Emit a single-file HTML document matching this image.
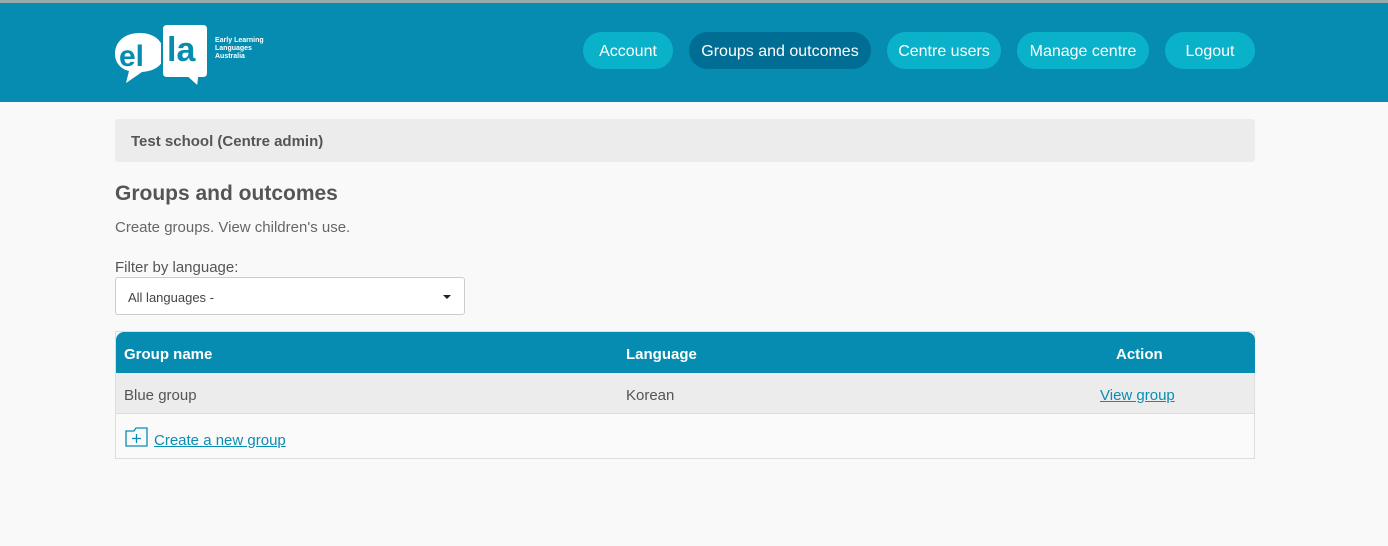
<!DOCTYPE html>
<html><head><style>
*{box-sizing:border-box;margin:0;padding:0}
body{width:1388px;height:546px;background:#f9f9f9;font-family:"Liberation Sans",sans-serif;color:#555;position:relative;overflow:hidden}
.top{position:absolute;top:0;left:0;width:1388px;height:3px;background:#9aa}
.hdr{position:absolute;top:3px;left:0;width:1388px;height:99px;background:#058cb0}
.btn{position:absolute;top:32px;height:37px;border-radius:19px;background:#0ab2c9;color:#fff;font-size:16px;line-height:39px;text-align:center}
.dark{background:#006d95}
.crumb{position:absolute;left:115px;top:119px;width:1140px;height:43px;background:#ececec;border-radius:3px;font-weight:bold;font-size:15px;line-height:45px;padding-left:16px;color:#555}
h1{position:absolute;left:115px;top:182px;font-size:21px;color:#555}
.p{position:absolute;left:115px;top:219px;font-size:15px;color:#666}
.lab{position:absolute;left:115px;top:259px;font-size:15px;color:#555}
.sel{position:absolute;left:115px;top:277px;width:350px;height:38px;background:#fff;border:1px solid #ccc;border-radius:3px;font-size:13px;line-height:39px;padding-left:12px;color:#444}
.sel:after{content:"";position:absolute;right:13px;top:17px;border:4px solid transparent;border-top:4px solid #222;border-bottom:none}
.tbl{position:absolute;left:115px;top:331px;width:1140px;height:128px;border:1px solid #ddd;background:#fafafa}
.th{position:absolute;left:0;top:0;width:1139px;height:41px;background:#058cb0;border-radius:8px 8px 0 0;color:#fff;font-weight:bold;font-size:15px}
.row{position:absolute;left:0;top:41px;width:1138px;height:41px;background:#ececec;border-bottom:1px solid #ddd;font-size:15px}
a{color:#0a8db3;text-decoration:underline}
</style></head><body>
<div class="top"></div>
<div class="hdr">
<svg style="position:absolute;left:114px;top:20px" width="96" height="62" viewBox="0 0 96 62">
<path d="M26 10 C10 10 1 19 1 31 C1 40 7 46 15 48 L12 60 L28 49 C41 48 50 42 50 31 C50 19 41 10 26 10Z" fill="#fff"/>
<path d="M53 1 H89 Q94 1 94 6 V50 Q94 55 89 55 H85 L84 64 L74 55 H53 Q48 55 48 50 V6 Q48 1 53 1Z" fill="#fff" stroke="#058cb0" stroke-width="2"/>
<text x="5" y="43" font-family="Liberation Sans" font-weight="bold" font-size="30" fill="#058cb0">el</text>
<text x="53" y="38" font-family="Liberation Sans" font-weight="bold" font-size="34" fill="#058cb0">la</text>
</svg>
<div style="position:absolute;left:215px;top:34px;color:#fff;font-size:7px;font-weight:bold;line-height:8px">Early Learning<br>Languages<br>Australia</div>
</div>
<div class="btn" style="left:583px;width:90px">Account</div>
<div class="btn dark" style="left:689px;width:182px">Groups and outcomes</div>
<div class="btn" style="left:887px;width:114px">Centre users</div>
<div class="btn" style="left:1017px;width:132px">Manage centre</div>
<div class="btn" style="left:1165px;width:90px">Logout</div>
<div class="crumb">Test school (Centre admin)</div>
<h1>Groups and outcomes</h1>
<div class="p">Create groups. View children's use.</div>
<div class="lab">Filter by language:</div>
<div class="sel">All languages -</div>
<div class="tbl">
<div class="th"><span style="position:absolute;left:8px;top:14px">Group name</span><span style="position:absolute;left:510px;top:14px">Language</span><span style="position:absolute;left:1000px;top:14px">Action</span></div>
<div class="row"><span style="position:absolute;left:8px;top:14px">Blue group</span><span style="position:absolute;left:510px;top:14px">Korean</span><a style="position:absolute;left:984px;top:14px">View group</a></div>
<svg style="position:absolute;left:9px;top:95px" width="24" height="20" viewBox="0 0 24 20"><path d="M1 4 H9 L11 1 H22 V19 H1Z" fill="none" stroke="#0a8db3" stroke-width="1.3"/><path d="M11.5 7 V16 M7 11.5 H16" stroke="#0a8db3" stroke-width="1.3"/></svg>
<a style="position:absolute;left:38px;top:100px;font-size:15px">Create a new group</a>
</div>
</body></html>
